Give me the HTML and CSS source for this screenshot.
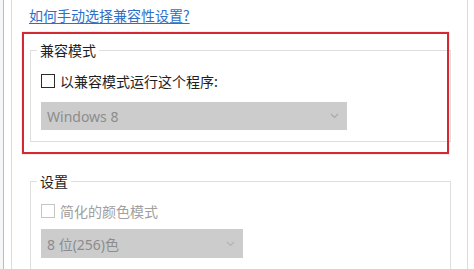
FILE: index.html
```html
<!DOCTYPE html>
<html lang="zh-CN">
<head>
<meta charset="utf-8">
<link rel="stylesheet" href="styles.css">
</head>
<body>
<div class="window">
  <div class="panel">
    <a class="help-link" href="#">如何手动选择兼容性设置?</a>

    <fieldset class="group group-compat">
      <legend>兼容模式</legend>
      <label class="check-row">
        <span class="checkbox"></span>
        <span class="check-text">以兼容模式运行这个程序:</span>
      </label>
      <div class="select select-wide">
        <span class="select-text">Windows 8</span>
        <svg class="chevron" width="9" height="6" viewBox="0 0 9 6"><polyline points="1,1 4.5,4.5 8,1" fill="none" stroke="#a8a8a8" stroke-width="1.2"/></svg>
      </div>
    </fieldset>

    <fieldset class="group group-settings">
      <legend>设置</legend>
      <label class="check-row disabled">
        <span class="checkbox"></span>
        <span class="check-text">简化的颜色模式</span>
      </label>
      <div class="select select-narrow">
        <span class="select-text">8 位(256)色</span>
        <svg class="chevron" width="9" height="6" viewBox="0 0 9 6"><polyline points="1,1 4.5,4.5 8,1" fill="none" stroke="#b4b4b4" stroke-width="1.2"/></svg>
      </div>
    </fieldset>
  </div>
  <div class="highlight"></div>
</div>
</body>
</html>
```

FILE: styles.css
```css
html, body {
  margin: 0;
  padding: 0;
  background: #ffffff;
}

body {
  width: 474px;
  height: 269px;
  overflow: hidden;
  font-family: "Noto Sans", "Noto Sans CJK SC", sans-serif;
  font-size: 14px;
  color: #1e1e1e;
  background: #f4f6f8;
}

.window {
  position: relative;
  margin-left: 3px;
  height: 269px;
  border-left: 1px solid #a9bfd9;
  padding-left: 7px;
  background: #ffffff;
}

.panel {
  width: 457px;
  height: 269px;
  overflow: hidden;
  box-sizing: border-box;
  border-left: 1px solid #dcdcdc;
  border-right: 1px solid #dcdcdc;
  padding-left: 17px;
  padding-top: 5px;
  background: #ffffff;
}

.help-link {
  display: inline-block;
  line-height: 20px;
  color: #2f6fc6;
  text-decoration: underline;
  text-underline-offset: 2px;
  font-family: "Noto Sans CJK SC", sans-serif;
}

.group {
  margin: 0;
  margin-left: 1px;
  width: 421px;
  box-sizing: border-box;
  border: 1px solid #dedede;
  padding: 0 10px 11px 6px;
  min-width: 0;
}

.group legend {
  padding: 0 3px;
  line-height: 16px;
  font-family: "Noto Sans CJK SC", sans-serif;
  color: #1e1e1e;
}

.group-compat {
  margin-top: 17px;
}

.group-settings {
  margin-top: 31px;
  padding-bottom: 12px;
}

.check-row {
  display: flex;
  align-items: center;
  gap: 5px;
  height: 20px;
  margin-top: 13px;
  margin-left: 4px;
  font-family: "Noto Sans CJK SC", sans-serif;
}

.group-settings .check-row {
  margin-top: 12px;
}

.checkbox {
  width: 12px;
  height: 12px;
  border: 1px solid #2a2a2a;
  background: #ffffff;
  flex: none;
}

.check-row.disabled .checkbox {
  border-color: #c4c4c4;
}

.check-row.disabled .check-text {
  color: #a0a0a0;
}

.select {
  display: flex;
  align-items: center;
  justify-content: space-between;
  height: 28px;
  margin-left: 4px;
  margin-top: 11px;
  padding: 0 8px 0 6px;
  box-sizing: border-box;
  background: #cccccc;
  color: #8c8c8c;
}

.select-wide {
  width: 306px;
}

.select-narrow {
  width: 202px;
  margin-top: 8px;
  height: 29px;
}

.select-text {
  font-family: "Noto Sans", "Noto Sans CJK SC", sans-serif;
  font-size: 14px;
}

.chevron {
  display: block;
}

.highlight {
  position: absolute;
  left: 18px;
  top: 32px;
  width: 427px;
  height: 122px;
  box-sizing: border-box;
  border: 2px solid #d22a33;
  box-shadow: 0 0 1px rgba(210, 42, 51, 0.5);
  pointer-events: none;
}
```
